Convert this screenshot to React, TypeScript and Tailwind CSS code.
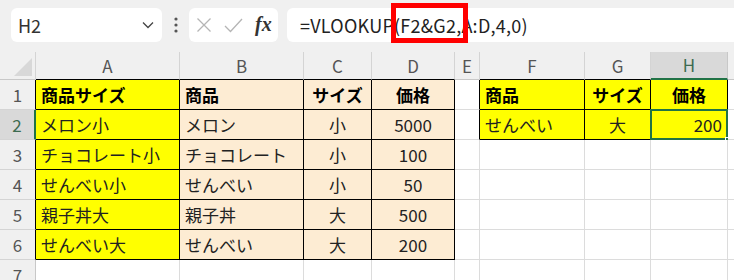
import React from 'react';

type Cell = { t?: string; bg?: 'y' | 'o'; b?: boolean; al?: 'l' | 'c' | 'r' };

const COLS = ['A', 'B', 'C', 'D', 'E', 'F', 'G', 'H', ''];

const rows: Cell[][] = [
  [
    { t: '商品サイズ', bg: 'y', b: true },
    { t: '商品', bg: 'o', b: true },
    { t: 'サイズ', bg: 'o', b: true, al: 'c' },
    { t: '価格', bg: 'o', b: true, al: 'c' },
    {},
    { t: '商品', bg: 'y', b: true },
    { t: 'サイズ', bg: 'y', b: true, al: 'c' },
    { t: '価格', bg: 'y', b: true, al: 'c' },
    {},
  ],
  [
    { t: 'メロン小', bg: 'y' },
    { t: 'メロン', bg: 'o' },
    { t: '小', bg: 'o', al: 'c' },
    { t: '5000', bg: 'o', al: 'c' },
    {},
    { t: 'せんべい', bg: 'y' },
    { t: '大', bg: 'y', al: 'c' },
    { t: '200', bg: 'y', al: 'r' },
    {},
  ],
  [
    { t: 'チョコレート小', bg: 'y' },
    { t: 'チョコレート', bg: 'o' },
    { t: '小', bg: 'o', al: 'c' },
    { t: '100', bg: 'o', al: 'c' },
    {}, {}, {}, {}, {},
  ],
  [
    { t: 'せんべい小', bg: 'y' },
    { t: 'せんべい', bg: 'o' },
    { t: '小', bg: 'o', al: 'c' },
    { t: '50', bg: 'o', al: 'c' },
    {}, {}, {}, {}, {},
  ],
  [
    { t: '親子丼大', bg: 'y' },
    { t: '親子丼', bg: 'o' },
    { t: '大', bg: 'o', al: 'c' },
    { t: '500', bg: 'o', al: 'c' },
    {}, {}, {}, {}, {},
  ],
  [
    { t: 'せんべい大', bg: 'y' },
    { t: 'せんべい', bg: 'o' },
    { t: '大', bg: 'o', al: 'c' },
    { t: '200', bg: 'o', al: 'c' },
    {}, {}, {}, {}, {},
  ],
  [{}, {}, {}, {}, {}, {}, {}, {}, {}],
];

// cell (row 1-based, col 0-based) inside a bordered table
const inT = (r: number, c: number) =>
  (r >= 1 && r <= 6 && c >= 0 && c <= 3) || (r >= 1 && r <= 2 && c >= 5 && c <= 7);

const ChevronDown = () => (
  <svg width="12" height="8" viewBox="0 0 12 8" fill="none">
    <path d="M1 1.5l5 5 5-5" stroke="#444" strokeWidth="1.3" />
  </svg>
);

const Toolbar = () => (
  <div className="flex items-center h-[50px] bg-[#f0f0f0] pl-[11px]">
    <div className="flex items-center justify-between w-[151px] h-[34px] bg-white rounded-[6px] pl-[7px] pr-[8px]">
      <span className="text-[18px] text-[#333]">H2</span>
      <ChevronDown />
    </div>
    <div className="w-[27px] flex justify-center">
      <svg width="4" height="16" viewBox="0 0 4 16">
        <circle cx="2" cy="2" r="1.6" fill="#555" />
        <circle cx="2" cy="8" r="1.6" fill="#555" />
        <circle cx="2" cy="14" r="1.6" fill="#555" />
      </svg>
    </div>
    <div className="flex items-center w-[89px] h-[34px] bg-white rounded-[6px] pl-[7px] gap-[12px]">
      <svg width="16" height="16" viewBox="0 0 16 16">
        <path d="M1.5 1.5l13 13M14.5 1.5l-13 13" stroke="#b5b5b5" strokeWidth="1.3" />
      </svg>
      <svg width="19" height="15" viewBox="0 0 19 15">
        <path d="M1 8l5.5 5.5L18 1" stroke="#b5b5b5" strokeWidth="1.3" fill="none" />
      </svg>
      <span className="font-['Liberation_Serif',serif] italic font-bold text-[20px] text-[#333] leading-none -mt-[2px]">
        fx
      </span>
    </div>
    <div className="ml-[9px] flex-1 h-[34px] bg-white rounded-l-[6px] flex items-center pl-[13px]">
      <span className="text-[18px] text-[#222] tracking-[0.25px]">=VLOOKUP(F2&amp;G2,A:D,4,0)</span>
    </div>
  </div>
);

export default function App() {
  return (
    <div className="relative w-[734px] h-[280px] overflow-hidden bg-white font-['Noto_Sans_CJK_JP',sans-serif]">
      <Toolbar />
      <div className="h-[2px] bg-[#f0f0f0]" />
      <div className="grid grid-cols-[36px_144px_124px_68px_83px_25px_105px_66px_77px_60px] grid-rows-[28px_repeat(7,30px)]">
        {/* corner */}
        <div className="relative bg-[#f0f0f0] border-r border-b border-r-[#d4d4d4] border-b-[#c8c8c8]">
          <div className="absolute right-[3px] bottom-[3px] w-0 h-0 border-l-[18px] border-l-transparent border-b-[18px] border-b-[#d8d8d8]" />
        </div>
        {COLS.map((c, i) =>
          i === 7 ? (
            <div
              key={c}
              className="flex items-center justify-center bg-[#d9d9d9] border-r border-r-[#c8c8c8] border-b-2 border-b-[#217346] text-[17px] text-[#3d6b50]"
            >
              {c}
            </div>
          ) : (
            <div
              key={c + i}
              className={`flex items-center justify-center bg-[#f0f0f0] border-r border-b border-r-[#d4d4d4] text-[17px] text-[#555] ${
                inT(1, i) ? 'border-b-black' : 'border-b-[#c8c8c8]'
              }`}
            >
              {c}
            </div>
          )
        )}
        {rows.map((row, ri) => {
          const r = ri + 1;
          return (
            <React.Fragment key={r}>
              {r === 2 ? (
                <div className="flex items-center justify-center bg-[#d9d9d9] border-r-2 border-r-[#217346] border-b border-b-[#d4d4d4] text-[17px] text-[#3d6b50]">
                  {r}
                </div>
              ) : (
                <div
                  className={`flex items-center justify-center bg-[#f0f0f0] border-r border-b border-b-[#d4d4d4] text-[17px] text-[#555] ${
                    inT(r, 0) ? 'border-r-black' : 'border-r-[#c8c8c8]'
                  }`}
                >
                  {r}
                </div>
              )}
              {row.map((cell, ci) => {
                const right = inT(r, ci) || inT(r, ci + 1) ? 'border-r-black' : 'border-r-[#dcdcdc]';
                const bottom = inT(r, ci) || inT(r + 1, ci) ? 'border-b-black' : 'border-b-[#dcdcdc]';
                const bg = cell.bg === 'y' ? 'bg-[#ffff00]' : cell.bg === 'o' ? 'bg-[#fdecd3]' : 'bg-white';
                const al =
                  cell.al === 'c' ? 'justify-center' : cell.al === 'r' ? 'justify-end pr-[5px]' : 'justify-start pl-[5px]';
                const weight = cell.b ? 'font-bold text-black' : 'font-normal text-[#222]';
                const selected = r === 2 && ci === 7;
                return (
                  <div
                    key={ci}
                    className={`relative flex items-center border-r border-b ${right} ${bottom} ${bg} ${al} ${weight} text-[17px] whitespace-nowrap`}
                  >
                    {cell.t}
                    {selected && (
                      <>
                        <div className="absolute -left-px -top-px right-[-1px] bottom-[-1px] border-2 border-[#217346]" />
                        <div className="absolute right-[-4px] bottom-[-4px] w-[6px] h-[6px] bg-[#217346] border border-white" />
                      </>
                    )}
                  </div>
                );
              })}
            </React.Fragment>
          );
        })}
      </div>
      {/* red highlight box over the formula */}
      <div className="absolute left-[391px] top-[3px] w-[77px] h-[40px] border-[5px] border-[#ff0000]" />
    </div>
  );
}
